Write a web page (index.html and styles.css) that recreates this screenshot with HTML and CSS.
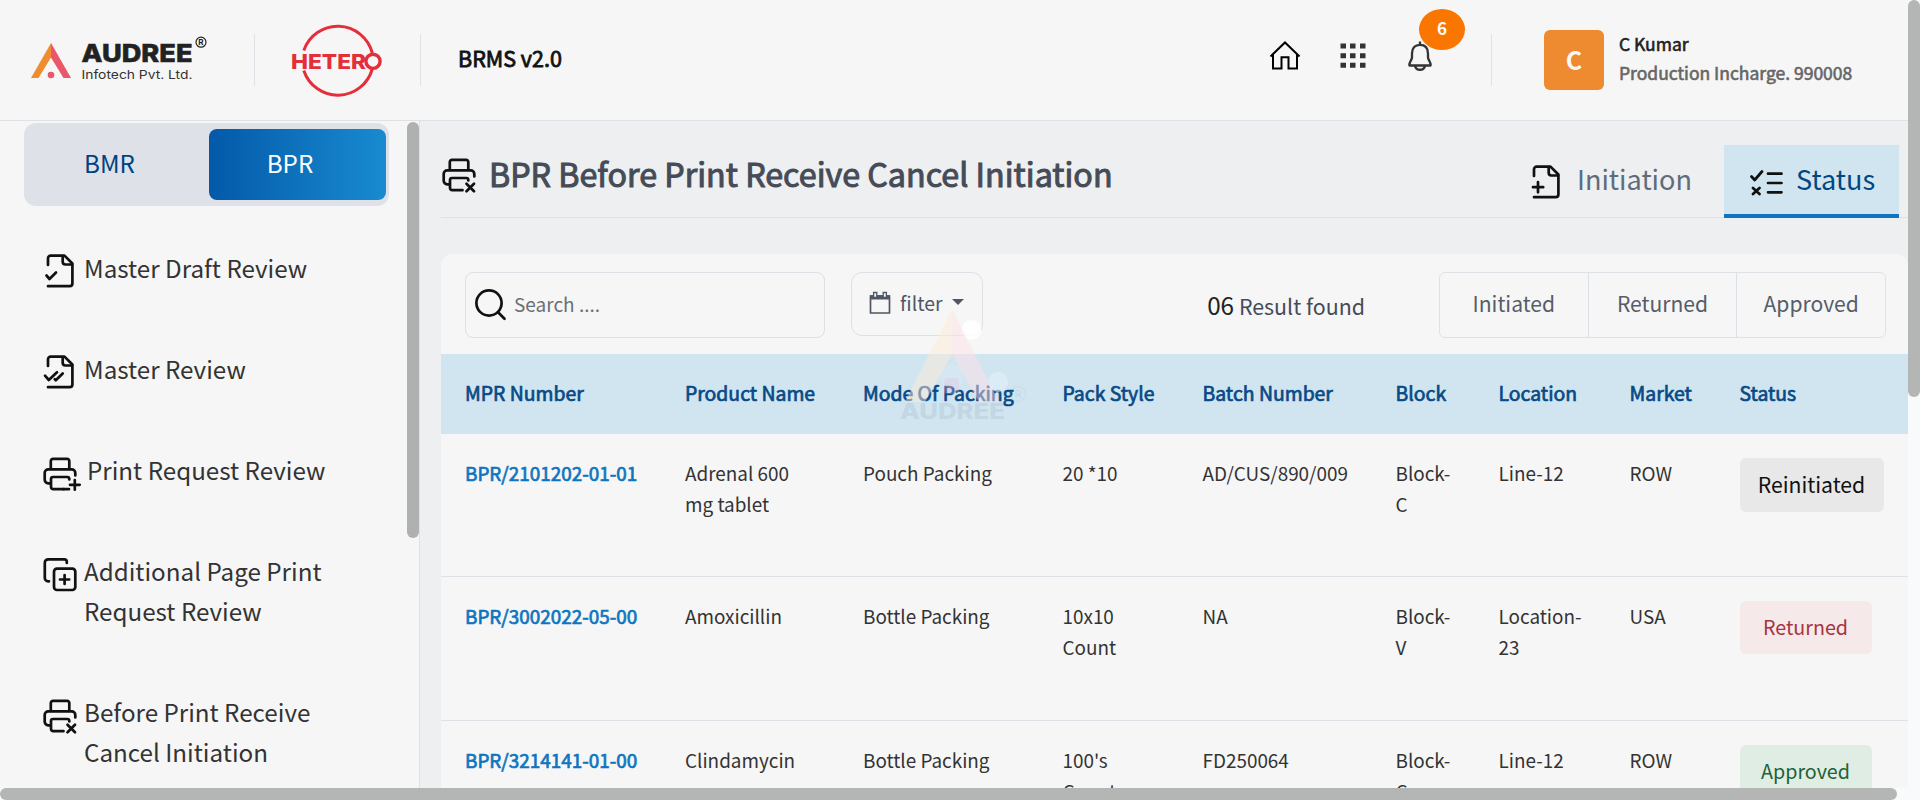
FILE: index.html
```html
<!DOCTYPE html>
<html lang="en">
<head>
<meta charset="utf-8">
<title>BRMS v2.0</title>
<link rel="stylesheet" href="styles.css">
</head>
<body>
<svg class="defs" aria-hidden="true">
  <symbol id="file" viewBox="0 0 40 40">
    <path d="M5 14V7.300a2.700 2.700 0 0 1 2.700-2.700H21.500L29.400 12.500V32.500a2.700 2.700 0 0 1-2.700 2.700H5"/>
    <path d="M19.700 5v5.800a2.700 2.700 0 0 0 2.700 2.700H29"/>
  </symbol>
  <symbol id="printer" viewBox="0 0 40 40">
    <path d="M7.800 16V8a2.200 2.200 0 0 1 2.200-2.200H24.100A2.200 2.200 0 0 1 26.300 8V16"/>
    <path d="M7 30.300H5.200a3.500 3.500 0 0 1-3.500-3.500V19.900a3.600 3.600 0 0 1 3.600-3.600H28.700a3.600 3.600 0 0 1 3.600 3.600V22.500"/>
    <path d="M26.300 26.500V26a2 2 0 0 0-2-2H10a2 2 0 0 0-2 2V34a2.200 2.200 0 0 0 2.200 2.200H20.500"/>
  </symbol>
</svg>
<div class="app">
  <header class="topbar">
    <svg class="logo-audree" width="190" height="60" viewBox="0 0 190 60">
      <path d="M31 13 11 48H18.500L31 27.500z" fill="#ef8c31"/>
      <path d="M31 13 51 48H43.500L31 27.500z" fill="#e95768"/>
      <circle cx="31" cy="45" r="3.300" fill="#e95768"/>
      <text x="61.500" y="32" class="brand" textLength="111" lengthAdjust="spacingAndGlyphs">AUDREE</text>
      <text x="61.500" y="48.500" class="brand-sub" textLength="111" lengthAdjust="spacingAndGlyphs">Infotech Pvt. Ltd.</text>
      <circle cx="181" cy="12.200" r="5" fill="none" stroke="#222" stroke-width="1.200"/>
      <text x="181" y="15" text-anchor="middle" class="brand-r">R</text>
    </svg>
    <span class="vline v1"></span>
    <svg class="logo-hetero" width="92" height="76" viewBox="0 0 92 76">
      <g fill="none" stroke="#e42e39" stroke-width="3">
        <path d="M12.800 28.500A35.800 35.800 0 0 1 81.300 31"/>
        <path d="M12.800 48.500A35.800 35.800 0 0 0 81.300 47"/>
        <circle cx="82" cy="39.300" r="7.100" stroke-width="3.400"/>
      </g>
      <text x="0" y="47" class="hetero" textLength="75" lengthAdjust="spacingAndGlyphs">HETER</text>
    </svg>
    <span class="vline v2"></span>
    <span class="product">BRMS v2.0</span>
    <nav class="tools">
      <svg width="32" height="32" viewBox="0 0 32 32" fill="none" stroke="#000" stroke-width="2"><path d="M1.500 16.500 16 2.500 30.500 16.500M4 14.500V28.500H12.500V17.200H19.500V28.500H28V14.500"/></svg>
      <svg width="26" height="26" viewBox="0 0 26 26" fill="#333"><path d="M.5.500H6v5H.5zM10 .5h5.500v5H10zM20 .5h5.500v5H20zM.5 10.200H6v5H.5zM10 10.200h5.500v5H10zM20 10.200h5.500v5H20zM.5 19.800H6v5H.5zM10 19.800h5.500v5H10zM20 19.800h5.500v5H20z"/></svg>
      <span class="bell">
        <svg width="26" height="32" viewBox="0 0 26 32" fill="none" stroke="#333" stroke-width="2.300" stroke-linejoin="round"><path d="M13 1.500V5M2.500 25.500C1.500 23 4.500 21 5 17.500V13.500C5 8 8 4.800 13 4.800S21 8 21 13.500V17.500C21.500 21 24.500 23 23.500 25.500zM8 26C9 31 17 31 18 26"/></svg>
        <span class="count">6</span>
      </span>
    </nav>
    <span class="vline v3"></span>
    <div class="avatar">C</div>
    <div class="user"><span class="name">C Kumar</span><span class="role">Production Incharge. 990008</span></div>
  </header>

  <div class="body">
    <aside class="sidebar">
      <div class="toggle"><span>BMR</span><span class="on">BPR</span></div>
      <ul class="menu">
        <li><svg class="ic"><use href="#file"/><path d="M3.500 24.500 6.500 28 13 21.500"/></svg><span>Master Draft Review</span></li>
        <li><svg class="ic"><use href="#file"/><path d="M2 23.700 5.800 28 14 20.300M11.800 27.300 12.800 28.300 19.700 21.500"/></svg><span>Master Review</span></li>
        <li><svg class="ic wide"><use href="#printer"/><path d="M20.500 36.200H26M31.800 27V36.700M27 31.800H36.700"/></svg><span>Print Request Review</span></li>
        <li><svg class="ic"><path d="M23.800 9V7.800a2.500 2.500 0 0 0-2.500-2.500H5.300A3.500 3.500 0 0 0 1.800 8.800V24a3.300 3.300 0 0 0 3.300 3.300H6"/><rect x="11" y="14.700" width="21.300" height="21.300" rx="3"/><path d="M21.600 21V30M17 25.500H26.200"/></svg><span>Additional Page Print Request Review</span></li>
        <li><svg class="ic"><use href="#printer"/><path d="M24.500 29.800 32 37.300M32 29.800 24.500 37.300"/></svg><span>Before Print Receive Cancel Initiation</span></li>
      </ul>
      <span class="thumb side"></span>
    </aside>

    <main class="main">
      <div class="heading">
        <svg class="ic"><use href="#printer"/><path d="M24.500 29.800 32 37.300M32 29.800 24.500 37.300"/></svg>
        <h1>BPR Before Print Receive Cancel Initiation</h1>
        <div class="tab"><svg class="ic"><use href="#file"/><path d="M9 20V30.300M4 25.200H14.200"/></svg>Initiation</div>
        <div class="tab active"><svg class="ic"><path d="M1.500 15.500 4.700 19 12 10.500M3 27 9.500 33M9.500 27 3 33M18 12.700H31.500M18 22H31.500M18 31.300H31.500"/></svg>Status</div>
      </div>
      <section class="card">
        <div class="toolbar">
          <div class="search">
            <svg width="32" height="32" viewBox="0 0 32 32" fill="none" stroke="#111" stroke-width="2.700" stroke-linecap="round"><circle cx="14" cy="14" r="12.600"/><path d="M23.300 23.500 29.500 29.700"/></svg>
            <span>Search ....</span>
          </div>
          <div class="filter">
            <svg width="22" height="24" viewBox="0 0 22 24"><path d="M1.500 5H20.500V22H1.500z" fill="none" stroke="#4f5764" stroke-width="1.700"/><path d="M1 4.200H21V8.500H1z" fill="#4f5764"/><path d="M4.600 1.500h3.200v5H4.600zM14.200 1.500h3.200v5H14.200z" fill="#f6f6f6" stroke="#4f5764" stroke-width="1.300"/></svg>
            <span>filter</span><i class="caret"></i>
          </div>
          <div class="result"><b>06</b> Result found</div>
          <div class="group"><span>Initiated</span><span>Returned</span><span>Approved</span></div>
        </div>
        <table>
          <colgroup><col class="c1"><col class="c2"><col class="c3"><col class="c4"><col class="c5"><col class="c6"><col class="c7"><col class="c8"><col></colgroup>
          <thead><tr><th>MPR Number</th><th>Product Name</th><th>Mode Of Packing</th><th>Pack Style</th><th>Batch Number</th><th>Block</th><th>Location</th><th>Market</th><th>Status</th></tr></thead>
          <tbody>
            <tr><td class="id">BPR/2101202-01-01</td><td>Adrenal 600<br>mg tablet</td><td>Pouch Packing</td><td>20 *10</td><td>AD/CUS/890/009</td><td>Block-<br>C</td><td>Line-12</td><td>ROW</td><td><span class="pill re">Reinitiated</span></td></tr>
            <tr><td class="id">BPR/3002022-05-00</td><td>Amoxicillin</td><td>Bottle Packing</td><td>10x10<br>Count</td><td>NA</td><td>Block-<br>V</td><td>Location-<br>23</td><td>USA</td><td><span class="pill ret">Returned</span></td></tr>
            <tr><td class="id">BPR/3214141-01-00</td><td>Clindamycin</td><td>Bottle Packing</td><td>100's<br>Count</td><td>FD250064</td><td>Block-<br>C</td><td>Line-12</td><td>ROW</td><td><span class="pill app-ok">Approved</span></td></tr>
          </tbody>
        </table>
      </section>
    </main>
  </div>
</div>
<svg class="watermark" width="136" height="130" viewBox="0 0 136 130">
  <circle cx="75.500" cy="30" r="10" fill="#fff" opacity=".85"/>
  <circle cx="102" cy="82" r="10" fill="#e2f0fb" opacity=".6"/>
  <circle cx="56" cy="76" r="12" fill="#e2f0fb" opacity=".25"/>
  <path d="M56 9 9 102H29L56 54z" fill="#ffecd6" opacity=".48"/>
  <path d="M56 9 103 102H83L56 54z" fill="#ffe0e6" opacity=".48"/>
  <rect x="48" y="78" width="15" height="16" rx="4" fill="#e9b6cf" opacity=".28"/>
  <text x="4" y="119" class="wm-text" textLength="105" lengthAdjust="spacingAndGlyphs">AUDREE</text>
  <circle cx="122" cy="94" r="7.500" fill="none" stroke="#8aa" opacity=".15"/>
  <text x="122" y="98" text-anchor="middle" class="wm-r">R</text>
</svg>
<span class="track"></span><span class="thumb right"></span>
<span class="track-b"></span><span class="thumb bottom"></span>
</body>
</html>
```
FILE: styles.css
```css
* { box-sizing: border-box; }
html, body { margin: 0; height: 800px; overflow: hidden; }
body {
  position: relative;
  background: #edeff1;
  color: #333;
  font-family: "Noto Sans CJK SC", "Noto Sans", sans-serif;
  font-size: 18.9px;
}
.defs { position: absolute; width: 0; height: 0; }
.app { width: 1908px; height: 788px; overflow: hidden; display: flex; flex-direction: column; }

/* top bar */
.topbar {
  flex: none; height: 121px; padding-left: 20px;
  display: flex; align-items: center;
  background: #f6f6f6; border-bottom: 1px solid #dee2e6;
}
.topbar svg { flex: none; display: block; }
.brand { font: 800 24.500px Inter, sans-serif; fill: #222; stroke: #222; stroke-width: .5; }
.brand-sub { font: 400 12.300px Inter, sans-serif; fill: #333; }
.brand-r { font: 700 8px Inter, sans-serif; fill: #222; }
.logo-hetero { margin-top: -1px; }
.hetero { font: 800 20.500px Inter, sans-serif; fill: #e42e39; }
.vline { width: 1px; height: 52px; background: #dee2e6; }
.v1 { margin: 0 36px 0 44px; }
.v2 { margin: 0 37px 0 37px; }
.v3 { margin-left: 58px; margin-right: 52px; }
.product { font-size: 21.500px; color: #111; -webkit-text-stroke: .8px #111; line-height: 40px; margin-top: -4px; }
.tools { margin-left: auto; display: flex; align-items: center; gap: 40px; padding-bottom: 9px; }
.tools > svg + svg { margin-left: -1px; margin-right: 1px; }
.bell { position: relative; }
.count {
  position: absolute; left: 12px; top: -31px; width: 46px; height: 41px;
  border-radius: 50%; background: #f97600; color: #fff;
  font-size: 17px; font-weight: 700; line-height: 37px; text-align: center;
}
.avatar {
  width: 60px; height: 60px; border-radius: 6px; background: #ee8b31; color: #f8f8f8;
  font-size: 25px; font-weight: 700; line-height: 59px; text-align: center;
}
.user { width: 304px; padding-left: 15px; display: flex; flex-direction: column; font-size: 17.500px; line-height: 29px; padding-bottom: 4px; }
.name { color: #222; -webkit-text-stroke: .6px #222; }
.role { color: #666; -webkit-text-stroke: .6px #666; }

/* icons */
.ic {
  flex: none; width: 40px; height: 40px; display: block; overflow: visible;
  fill: none; stroke: #111; stroke-width: 2.700; stroke-linecap: round; stroke-linejoin: round;
}

/* sidebar */
.body { flex: 1; min-height: 0; display: flex; }
.sidebar { position: relative; flex: none; width: 420px; background: #f6f6f6; border-right: 1px solid #dee2e6; padding: 2px 30px 0 24px; }
.toggle {
  height: 83px; width: 365px; border-radius: 12px; background: #dee2e8; padding: 6px 3px 6px 0;
  display: flex; font-size: 24.200px; line-height: 68px; text-align: center; color: #00427f;
}
.toggle span { flex: 1; padding-right: 14px; }
.toggle .on { flex: none; width: 177px; padding: 0 15px 0 0; border-radius: 8px; color: #fff; background: linear-gradient(90deg, #0459a9, #188bd0); }
.menu { list-style: none; margin: 42px 0 0; padding: 0 0 0 19px; display: flex; flex-direction: column; gap: 61px; font-size: 24.200px; line-height: 40px; }
.menu li { display: flex; }
.menu span { width: 260px; padding-left: 1px; }
.menu .ic { margin: 3px 0 -3px; }
.menu .wide { margin-right: 3px; }

/* scrollbars */
.thumb { position: absolute; border-radius: 6px; background: #afb1b0; }
.side { left: 407px; top: 1px; width: 12px; height: 416px; }
.right { left: 1908px; top: 0; width: 12px; height: 397px; background: #b4b6b5; }
.bottom { left: 0; top: 788px; width: 1897px; height: 12px; background: #b4b6b5; }
.track { position: absolute; left: 1908px; top: 0; width: 12px; height: 800px; background: #f9fafc; }
.track-b { position: absolute; left: 0; top: 788px; width: 1920px; height: 12px; background: #f9fafc; }

/* main */
.main { flex: 1; min-width: 0; padding: 24px 0 0 21px; }
.heading { height: 73px; display: flex; border-bottom: 1px solid #dfe2e4; padding-right: 9px; }
.heading > .ic { margin: 9px 0 0 1px; }
h1 { margin: 0 auto 0 0; padding-left: 7px; font-size: 32.250px; font-weight: 400; line-height: 56px; color: #454b57; -webkit-text-stroke: 1px #454b57; }
.tab { height: 73px; display: flex; padding: 0 23px 0 20px; font-size: 27.100px; line-height: 67px; color: #606c7c; }
.tab .ic { margin: 17px 7px 0 0; }
.tab:not(.active) { padding-right: 32px; }
.tab:not(.active) .ic { margin-left: -1px; margin-right: 8px; }
.active { width: 175px; padding-left: 26px; background: #d1e5f0; color: #00487f; border-bottom: 4px solid #0f75c0; }
.active .ic { margin: 16px 6px 0 0; }

.card { margin-top: 36px; background: #f6f6f6; border-radius: 12px 12px 0 0; }
.toolbar { height: 100px; padding: 18px 22px 0 24px; display: flex; }
.search { width: 360px; height: 66px; border: 1px solid #dee0e6; border-radius: 8px; display: flex; align-items: center; padding-left: 9px; font-size: 19px; color: #6d6f72; }
.search span { padding: 0 0 3px 7px; }
.filter { margin-left: 26px; width: 132px; height: 64px; border: 1px solid #dee0e6; border-radius: 11px; display: flex; align-items: center; padding: 0 0 4px 17px; font-size: 19.400px; color: #4f5764; }
.filter svg { margin-right: 9px; margin-top: 2px; }
.caret { margin: 0 0 0 10px; border: 6px solid transparent; border-top-color: #4f5764; border-bottom: 0; }
.result { margin-left: auto; margin-right: 74px; font-size: 21.400px; line-height: 66px; color: #454b57; white-space: nowrap; }
.result b { font-weight: 400; font-size: 24.300px; color: #222; }
.group { width: 447px; height: 66px; border: 1px solid #dee2e6; border-radius: 6px; display: flex; font-size: 21.100px; line-height: 61px; text-align: center; color: #555d69; }
.group span { flex: 1; }
.group span + span { border-left: 1px solid #dbe0e7; }

table { width: 1467px; table-layout: fixed; border-collapse: separate; border-spacing: 0; line-height: 31.300px; }
.c1 { width: 220px; } .c2 { width: 178px; } .c3 { width: 199.500px; } .c4 { width: 141px; }
.c5 { width: 192px; } .c6 { width: 103px; } .c7 { width: 131px; } .c8 { width: 111px; }
th { height: 80px; padding: 0 0 3px 24px; background: #d1e5f0; text-align: left; font-size: 19.400px; font-weight: 400; color: #084a86; -webkit-text-stroke: .7px #084a86; white-space: nowrap; }
td { height: 144px; padding: 23px 0 0 24px; vertical-align: top; border-bottom: 1px solid #dee0e6; white-space: nowrap; }
tbody tr:first-child td { height: 143px; }
.id { color: #0f75c0; -webkit-text-stroke: .7px #0f75c0; }
th:nth-child(5), td:nth-child(5), th:nth-child(9), td:nth-child(9) { padding-left: 23px; }
.pill { display: block; width: 132px; height: 53px; margin-top: 1px; border-radius: 6px; text-align: center; font-size: 19.700px; line-height: 51px; }
.re { width: 144px; height: 54px; background: #e8e8e8; color: #111; font-size: 21.200px; }
.ret { background: #f5e9ea; color: #a93340; }
.app-ok { background: #e0ede4; color: #1c6335; }

/* overlay mark */
.watermark { position: absolute; left: 896px; top: 300px; pointer-events: none; }
.wm-text { font: 800 21.500px Inter, sans-serif; fill: #8ba0b0; opacity: .2; }
.wm-r { font: 400 11px Inter, sans-serif; fill: #8aa; opacity: .18; }
```
